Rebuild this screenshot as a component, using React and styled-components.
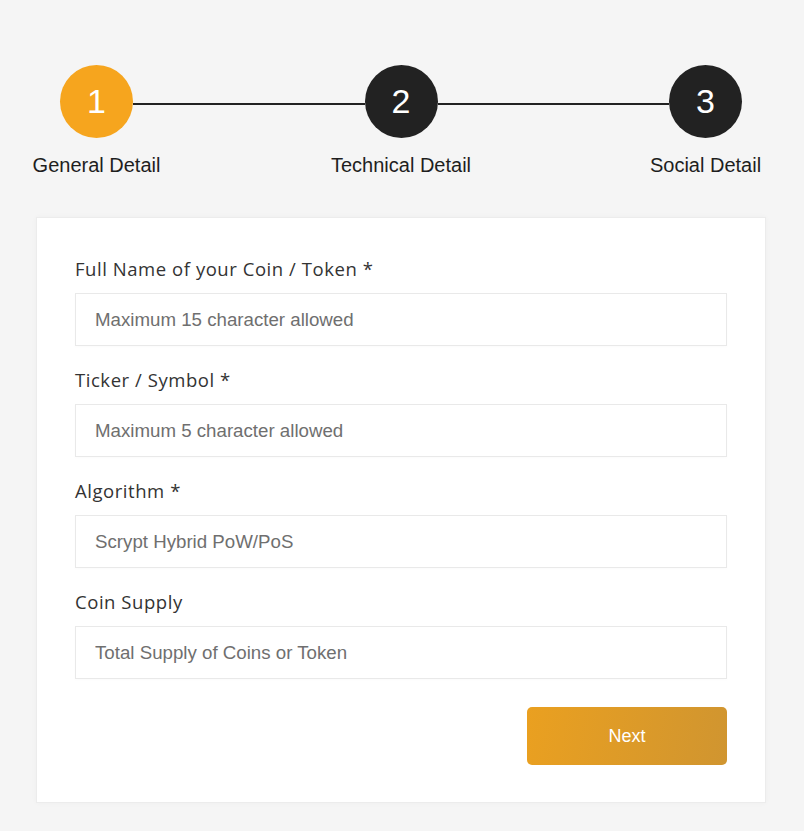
import React from "react"
import styled, { createGlobalStyle } from "styled-components"

const GlobalStyle = createGlobalStyle`
    body {
        margin: 0;
        background: #f5f5f5;
        font-family: "Liberation Sans", Arial, sans-serif;
    }
`

const Page = styled.div`
    width: 730px;
    padding: 65px 0 29px 36px;
`

const StepsRow = styled.div`
    display: flex;
    align-items: flex-start;
    padding: 0 24px;
`

const Step = styled.div`
    display: flex;
    flex-direction: column;
    align-items: center;
    width: 73px;
    flex-shrink: 0;
`

const Circle = styled.div`
    width: 73px;
    height: 73px;
    border-radius: 50%;
    background: ${p => (p.$active ? "#f6a51e" : "#222222")};
    color: #fff;
    display: flex;
    align-items: center;
    justify-content: center;
    font-size: 34px;
`

const StepLabel = styled.div`
    margin-top: 16px;
    white-space: nowrap;
    font-size: 20px;
    color: #1e1e1e;
`

const Connector = styled.div`
    flex: 1;
    height: 2px;
    margin-top: 38px;
    background: #222;
`

const Card = styled.form`
    margin-top: 40px;
    background: #fff;
    border: 1px solid #ececec;
    box-shadow: 0 0 6px rgba(0, 0, 0, 0.03);
    padding: 40px 38px 37px;
    display: flex;
    flex-direction: column;
`

const Field = styled.div`
    display: flex;
    flex-direction: column;
    margin-bottom: 23px;
`

const Label = styled.label`
    font-family: "Open Sans", "Noto Sans", sans-serif;
    font-size: 18.5px;
    line-height: 22px;
    letter-spacing: 0.55px;
    color: #333;
    margin-bottom: 13px;
`

const Input = styled.input`
    height: 53px;
    box-sizing: border-box;
    border: 1px solid #e9e9e9;
    padding: 0 19px;
    font-family: "Liberation Sans", Arial, sans-serif;
    font-size: 18.7px;
    color: #333;
    outline: none;
    box-shadow: 0 1px 3px rgba(0, 0, 0, 0.02);

    &::placeholder {
        color: #6f6f6f;
    }
`

const Actions = styled.div`
    display: flex;
    justify-content: flex-end;
    margin-top: 5px;
`

const NextButton = styled.button`
    width: 200px;
    height: 58px;
    border: none;
    border-radius: 5px;
    background: linear-gradient(100deg, #eaa020 0%, #d09530 100%);
    color: #fff;
    font-family: "Liberation Sans", Arial, sans-serif;
    font-size: 18px;
    cursor: pointer;
`

const steps = ["General Detail", "Technical Detail", "Social Detail"]

const fields = [
    { label: "Full Name of your Coin / Token *", placeholder: "Maximum 15 character allowed" },
    { label: "Ticker / Symbol *", placeholder: "Maximum 5 character allowed" },
    { label: "Algorithm *", placeholder: "Scrypt Hybrid PoW/PoS" },
    { label: "Coin Supply", placeholder: "Total Supply of Coins or Token" },
]

export default function App() {
    return (
        <Page>
            <GlobalStyle />
            <StepsRow>
                {steps.map((s, i) => (
                    <React.Fragment key={s}>
                        {i > 0 && <Connector />}
                        <Step>
                            <Circle $active={i === 0}>{i + 1}</Circle>
                            <StepLabel>{s}</StepLabel>
                        </Step>
                    </React.Fragment>
                ))}
            </StepsRow>
            <Card onSubmit={e => e.preventDefault()}>
                {fields.map(f => (
                    <Field key={f.label}>
                        <Label>{f.label}</Label>
                        <Input placeholder={f.placeholder} />
                    </Field>
                ))}
                <Actions>
                    <NextButton type="submit">Next</NextButton>
                </Actions>
            </Card>
        </Page>
    )
}
